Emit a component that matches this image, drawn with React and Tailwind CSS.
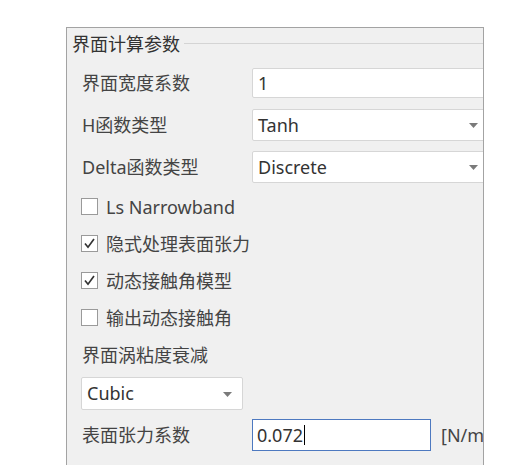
import React from "react";

const font = { fontFamily: '"Noto Sans", "Noto Sans CJK SC", sans-serif' };

function Arrow({ className }) {
  return (
    <svg className={className} width="9" height="5" viewBox="0 0 9 5">
      <path d="M0 0 L9 0 L4.5 5 Z" fill="#7a7a7a" />
    </svg>
  );
}

function Check({ checked, label }) {
  return (
    <div className="flex h-[37px] items-center">
      <div className="ml-[14px] flex h-[17px] w-[17px] shrink-0 items-center justify-center border border-[#9a9a9a] bg-white">
        {checked && (
          <svg width="13" height="13" viewBox="0 0 13 13">
            <path d="M2 6.5 L5 10.2 L11 2" fill="none" stroke="#333" strokeWidth="1.7" />
          </svg>
        )}
      </div>
      <span className="ml-[8px] text-[18px] leading-none text-[#444]">{label}</span>
    </div>
  );
}

export default function App() {
  return (
    <div className="h-[470px] w-[511px] overflow-hidden bg-white" style={font}>
      <div className="ml-[66px] mt-[27px] h-[438px] w-[418px] overflow-hidden border-l border-r border-t border-[#a3a3a3] bg-[#f0f0f0]">
        <div className="flex h-[31px] items-center">
          <span className="ml-[5px] text-[18px] leading-none text-[#333]">界面计算参数</span>
          <div className="ml-[4px] h-px flex-1 bg-[#d4d4d4]" />
        </div>

        <div className="mt-[9px] flex h-[30px] items-center">
          <span className="ml-[15px] w-[170px] shrink-0 text-[18px] leading-none text-[#444]">界面宽度系数</span>
          <div className="flex h-full w-[240px] shrink-0 items-center rounded-[2px] border border-[#d6d6d6] bg-white pl-[5px] text-[18px] text-[#333]">1</div>
        </div>

        <div className="mt-[11px] flex h-[32px] items-center">
          <span className="ml-[15px] w-[170px] shrink-0 text-[18px] leading-none text-[#444]">H函数类型</span>
          <div className="relative flex h-full w-[240px] shrink-0 items-center rounded-[2px] border border-[#d6d6d6] bg-white pl-[5px] text-[18px] text-[#333]">
            Tanh
            <Arrow className="absolute right-[13px] top-[13px]" />
          </div>
        </div>

        <div className="mt-[10px] flex h-[32px] items-center">
          <span className="ml-[15px] w-[170px] shrink-0 text-[18px] leading-none text-[#444]">Delta函数类型</span>
          <div className="relative flex h-full w-[240px] shrink-0 items-center rounded-[2px] border border-[#d6d6d6] bg-white pl-[5px] text-[18px] text-[#333]">
            Discrete
            <Arrow className="absolute right-[13px] top-[13px]" />
          </div>
        </div>

        <div className="mt-[5px]">
          <Check checked={false} label="Ls Narrowband" />
          <Check checked={true} label="隐式处理表面张力" />
          <Check checked={true} label="动态接触角模型" />
          <Check checked={false} label="输出动态接触角" />
        </div>

        <div className="flex h-[38px] items-center">
          <span className="ml-[15px] text-[18px] leading-none text-[#444]">界面涡粘度衰减</span>
        </div>

        <div className="relative ml-[14px] mt-[3px] flex h-[33px] w-[162px] items-center rounded-[2px] border border-[#d6d6d6] bg-white pl-[5px] text-[18px] text-[#333]">
          Cubic
          <Arrow className="absolute right-[10px] top-[14px]" />
        </div>

        <div className="mt-[9px] flex h-[32px] items-center">
          <span className="ml-[15px] w-[170px] shrink-0 text-[18px] leading-none text-[#444]">表面张力系数</span>
          <div className="flex h-full w-[179px] shrink-0 items-center border border-[#4d79c0] bg-white pl-[4px] text-[18px] text-[#333]">
            0.072<span className="ml-px inline-block h-[20px] w-px bg-black" />
          </div>
          <span className="ml-[10px] shrink-0 whitespace-nowrap text-[18px] leading-none text-[#444]">[N/m]</span>
        </div>
      </div>
    </div>
  );
}
